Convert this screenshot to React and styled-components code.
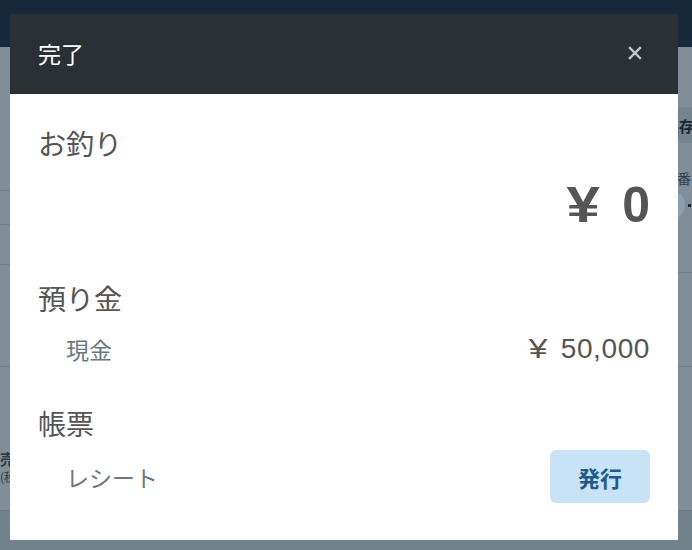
import React from 'react';
import styled, { createGlobalStyle } from 'styled-components';

const GlobalStyle = createGlobalStyle`
  html, body {
    margin: 0;
    padding: 0;
    width: 692px;
    height: 550px;
    overflow: hidden;
    font-family: "Liberation Sans", "Noto Sans CJK JP", sans-serif;
  }
`;

const Page = styled.div`
  position: relative;
  width: 692px;
  height: 550px;
  display: flex;
  flex-direction: column;
  background-color: #72828d;
  overflow: hidden;
`;

const TopBar = styled.div`
  height: 47px;
  flex-shrink: 0;
  background-color: #172a3b;
`;

const Main = styled.div`
  display: flex;
  height: 463px;
  background-color: #7f8e98;
  border-bottom: 1px solid #6c7b85;
`;

const LeftPane = styled.div`
  width: 340px;
  display: flex;
  flex-direction: column;
`;

const RightPane = styled.div`
  flex: 1;
  display: flex;
  flex-direction: column;
  align-items: flex-end;
`;

const Row = styled.div`
  height: ${(p) => p.h}px;
  flex-shrink: 0;
  border-bottom: ${(p) => (p.last ? 'none' : '1px solid #6f7e88')};
  display: flex;
  flex-direction: column;
  align-items: ${(p) => p.align || 'flex-start'};
  padding-top: ${(p) => p.pad || 0}px;
  width: 100%;
  box-sizing: border-box;
`;

const BgText = styled.div`
  font-family: "Noto Sans CJK JP", sans-serif;
  font-size: ${(p) => p.size || 14}px;
  font-weight: ${(p) => p.weight || 400};
  color: #2e3d48;
  line-height: 1.35;
  white-space: nowrap;
`;

const SaveButton = styled.div`
  margin-top: 60px;
  margin-right: -12px;
  height: 36px;
  padding: 0 10px;
  display: flex;
  align-items: center;
  background-color: #74848f;
  font-family: "Noto Sans CJK JP", sans-serif;
  font-size: 15px;
  font-weight: 700;
  color: #1a2733;
`;

const NumberLine = styled.div`
  display: flex;
  flex-direction: column;
  align-items: flex-start;
  margin-top: 26px;
  margin-right: -21px;
  width: 36px;
  gap: 2px;
`;

const Avatar = styled.div`
  width: 30px;
  height: 30px;
  border-radius: 50%;
  background-color: #8aa0b0;
  margin-left: -22px;
  position: relative;
  &::after {
    content: '';
    position: absolute;
    left: 33px;
    top: 14px;
    width: 3px;
    height: 3px;
    background: #1d2a35;
  }
`;

const Dialog = styled.div`
  position: absolute;
  left: 10px;
  top: 14px;
  width: 668px;
  height: 526px;
  display: flex;
  flex-direction: column;
  background-color: #ffffff;
`;

const DialogHeader = styled.div`
  height: 80px;
  flex-shrink: 0;
  box-sizing: border-box;
  display: flex;
  align-items: center;
  justify-content: space-between;
  padding: 0 34px 3px 28px;
  background-color: #2b3035;
`;

const DialogTitle = styled.div`
  font-family: "Noto Sans CJK JP", sans-serif;
  font-size: 23px;
  color: #ffffff;
`;

const CloseButton = styled.button`
  width: 18px;
  height: 18px;
  padding: 0;
  border: none;
  background: transparent;
  display: flex;
  align-items: center;
  justify-content: center;
  cursor: pointer;
`;

const DialogBody = styled.div`
  flex: 1;
  padding: 29px 28px 0;
  display: flex;
  flex-direction: column;
`;

const Section = styled.div`
  display: flex;
  flex-direction: column;
  margin-top: ${(p) => p.top || 0}px;
`;

const Heading = styled.div`
  font-family: "Noto Sans CJK JP", sans-serif;
  font-size: 28px;
  line-height: 40px;
  color: #555555;
`;

const BigAmount = styled.div`
  text-align: right;
  font-size: 50px;
  font-weight: 700;
  line-height: 70px;
  color: #555555;
  margin-top: 7px;
`;

const Yen = styled.span`
  display: inline-block;
  transform: scaleX(1.2);
  transform-origin: right center;
  margin-right: ${(p) => p.gap}px;
`;

const ItemRow = styled.div`
  display: flex;
  align-items: center;
  justify-content: space-between;
  min-height: ${(p) => p.h || 48}px;
  margin-top: 7px;
  padding-left: 28px;
`;

const ItemLabel = styled.div`
  font-family: "Noto Sans CJK JP", sans-serif;
  font-size: 23px;
  color: #6b7781;
`;

const ItemValue = styled.div`
  font-size: 28px;
  letter-spacing: 0.6px;
  color: #555555;
`;

const IssueButton = styled.button`
  width: 100px;
  height: 53px;
  border: none;
  border-radius: 6px;
  background-color: #c8e2f6;
  color: #1d5a8a;
  font-family: "Noto Sans CJK JP", sans-serif;
  font-size: 22px;
  font-weight: 700;
  cursor: pointer;
`;

const CloseIcon = () => (
  <svg width="14" height="14" viewBox="0 0 14 14">
    <path d="M2 2 L12 12 M12 2 L2 12" stroke="#c3c7cb" strokeWidth="2.4" strokeLinecap="square" />
  </svg>
);

const App = () => (
  <>
    <GlobalStyle />
    <Page>
      <TopBar />
      <Main>
        <LeftPane>
          <Row h={144} />
          <Row h={34} />
          <Row h={40} />
          <Row h={102} />
          <Row h={143} last pad={82}>
            <BgText size={15} weight={700}>売上</BgText>
            <BgText size={12}>(税込)</BgText>
          </Row>
        </LeftPane>
        <RightPane>
          <Row h={226} align="flex-end">
            <SaveButton>保存</SaveButton>
            <NumberLine>
              <BgText size={14}>番号</BgText>
              <Avatar />
            </NumberLine>
          </Row>
          <Row h={94} />
          <Row h={143} last />
        </RightPane>
      </Main>

      <Dialog>
        <DialogHeader>
          <DialogTitle>完了</DialogTitle>
          <CloseButton aria-label="閉じる">
            <CloseIcon />
          </CloseButton>
        </DialogHeader>
        <DialogBody>
          <Section>
            <Heading>お釣り</Heading>
            <BigAmount>
              <Yen gap={8}>¥</Yen> 0
            </BigAmount>
          </Section>
          <Section top={38}>
            <Heading>預り金</Heading>
            <ItemRow>
              <ItemLabel>現金</ItemLabel>
              <ItemValue>
                <Yen gap={4}>¥</Yen> 50,000
              </ItemValue>
            </ItemRow>
          </Section>
          <Section top={30}>
            <Heading>帳票</Heading>
            <ItemRow h={53}>
              <ItemLabel>レシート</ItemLabel>
              <IssueButton>発行</IssueButton>
            </ItemRow>
          </Section>
        </DialogBody>
      </Dialog>
    </Page>
  </>
);

export default App;
